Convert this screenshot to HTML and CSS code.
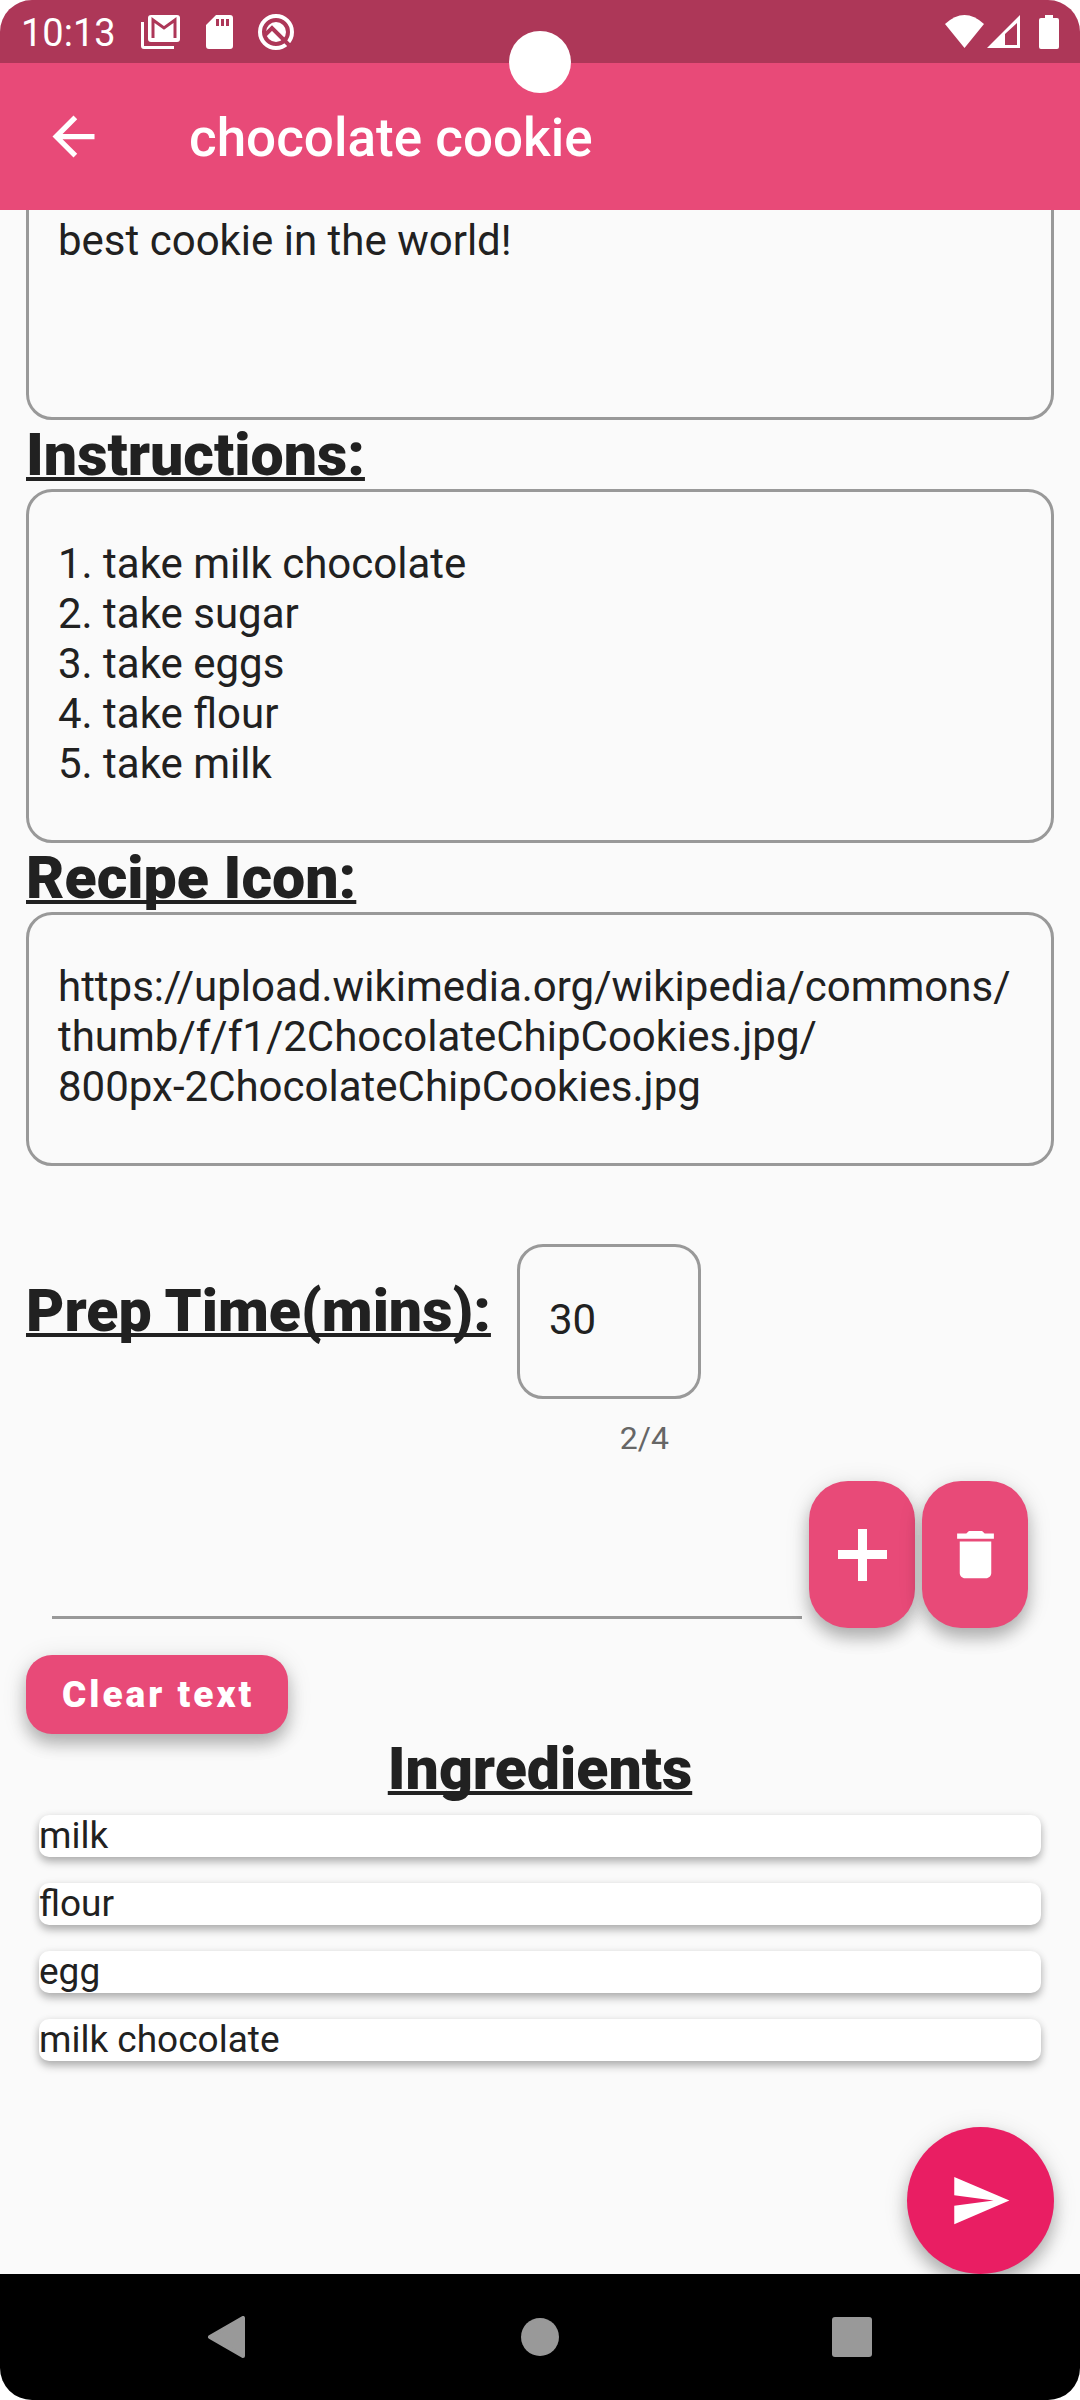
FILE: index.html
```html
<!DOCTYPE html>
<html lang="en">
<head>
<meta charset="utf-8">
<meta name="viewport" content="width=device-width, initial-scale=1">
<title>chocolate cookie</title>
<link rel="stylesheet" href="styles.css">
</head>
<body>
<div class="screen">
  <div class="status-bar">
    <span class="clock">10:13</span>
    <div class="status-group notifications">
      <svg class="ico-mail" viewBox="0 0 40 34" aria-hidden="true">
        <path fill="#fff" d="M0 7h3v24h30v3H3a3 3 0 0 1-3-3z"/>
        <rect x="7" y="0" width="32" height="27" rx="3" fill="#fff"/>
        <path d="M12 23V5l11 8 11-8v18" fill="none" stroke="#ad3758" stroke-width="3"/>
      </svg>
      <svg class="ico-sd" viewBox="0 0 27 34" aria-hidden="true">
        <path fill="#fff" fill-rule="evenodd" d="M10 0h14a3 3 0 0 1 3 3v28a3 3 0 0 1-3 3H3a3 3 0 0 1-3-3V10zM10 4v7h3V4zM15 4v7h3V4zM20 4v7h3V4z"/>
      </svg>
      <svg class="ico-q" viewBox="0 0 36 36" aria-hidden="true">
        <circle cx="18" cy="18" r="16" fill="none" stroke="#fff" stroke-width="4"/>
        <circle cx="18" cy="18" r="10" fill="#fff"/>
        <path d="M7 21l7-7 17 17" fill="none" stroke="#ad3758" stroke-width="4"/>
      </svg>
    </div>
    <div class="status-group system">
      <svg class="ico-wifi" viewBox="0 0 39 33" aria-hidden="true"><path fill="#fff" d="M0 9Q19.500-9 39 9L19.500 33z"/></svg>
      <svg class="ico-signal" viewBox="0 0 33 33" aria-hidden="true"><path fill="#fff" fill-rule="evenodd" d="M33 0v33H0zM18 19v11h12V8z"/></svg>
      <svg class="ico-battery" viewBox="0 0 20 34" aria-hidden="true"><path fill="#fff" d="M6 0h8v3h4a2 2 0 0 1 2 2v27a2 2 0 0 1-2 2H2a2 2 0 0 1-2-2V5a2 2 0 0 1 2-2h4z"/></svg>
    </div>
    <span class="camera"></span>
  </div>

  <header class="app-bar">
    <button class="back" type="button" aria-label="Back">
      <svg class="icon" viewBox="0 0 24 24"><path fill="#fff" d="M20 11H7.830l5.590-5.590L12 4l-8 8 8 8 1.410-1.410L7.830 13H20z"/></svg>
    </button>
    <h1 class="title">chocolate cookie</h1>
  </header>

  <main class="content">
    <form class="form">
      <textarea class="field description" rows="3" aria-label="Description" spellcheck="false">best cookie in the world!</textarea>

      <label class="heading" for="instructions">Instructions:</label>
      <textarea class="field" id="instructions" rows="5" spellcheck="false">1. take milk chocolate
2. take sugar
3. take eggs
4. take flour
5. take milk</textarea>

      <label class="heading" for="icon-url">Recipe Icon:</label>
      <textarea class="field" id="icon-url" rows="3" spellcheck="false">https://upload.wikimedia.org/wikipedia/commons/
thumb/f/f1/2ChocolateChipCookies.jpg/
800px-2ChocolateChipCookies.jpg</textarea>

      <div class="prep-row">
        <label class="heading prep-label" for="prep">Prep Time(mins):</label>
        <div class="prep-field">
          <input class="field" id="prep" type="text" inputmode="numeric" maxlength="4" value="30">
          <span class="counter">2/4</span>
        </div>
      </div>

      <div class="add-row">
        <input class="line-input" type="text" aria-label="Ingredient">
        <button class="square-btn" type="button" aria-label="Add ingredient">
          <svg class="ico-plus" viewBox="0 0 49 52"><path fill="#fff" d="M20 0h9v21h20v9H29v22h-9V30H0v-9h20z"/></svg>
        </button>
        <button class="square-btn" type="button" aria-label="Delete ingredient">
          <svg class="icon" viewBox="0 0 24 24"><path fill="#fff" d="M6 19c0 1.100.9 2 2 2h8c1.100 0 2-.9 2-2V7H6v12zM19 4h-3.500l-1-1h-5l-1 1H5v2h14V4z"/></svg>
        </button>
      </div>

      <button class="clear-btn" type="button">Clear text</button>
    </form>

    <h2 class="heading centered">Ingredients</h2>
    <ul class="ingredients">
      <li class="card">milk</li>
      <li class="card">flour</li>
      <li class="card">egg</li>
      <li class="card">milk chocolate</li>
    </ul>

    <button class="fab" type="button" aria-label="Send">
      <svg class="icon" viewBox="0 0 24 24"><path fill="#fff" d="M2.010 21L23 12 2.010 3 2 10l15 2-15 2z"/></svg>
    </button>
  </main>

  <nav class="nav-bar">
    <button class="nav-btn" type="button" aria-label="Back">
      <svg class="nav-icon" viewBox="0 0 42 42"><path fill="#999" stroke="#999" stroke-width="4" stroke-linejoin="round" d="M4 21L37 2v38z"/></svg>
    </button>
    <button class="nav-btn" type="button" aria-label="Home">
      <svg class="nav-icon" viewBox="0 0 42 42"><circle cx="21" cy="21" r="19" fill="#999"/></svg>
    </button>
    <button class="nav-btn" type="button" aria-label="Overview">
      <svg class="nav-icon" viewBox="0 0 42 42"><rect x="0" y="1" width="40" height="40" rx="3" fill="#999"/></svg>
    </button>
  </nav>
</div>
</body>
</html>
```
FILE: styles.css
```css
:root {
  --pink: #e84a78;
  --pink-dark: #ad3758;
  --accent: #e91e63;
  --ink: #212121;
  --line: #999;
  --raised: 0 10px 16px rgba(0, 0, 0, .24), 0 4px 26px rgba(0, 0, 0, .12);
}

* {
  box-sizing: border-box;
}

body {
  margin: 0;
  background: #fff;
  color: var(--ink);
  font-family: Roboto, "Liberation Sans", sans-serif;
  font-size: 42px;
  line-height: 50px;
}

button,
input,
textarea {
  font: inherit;
  color: inherit;
  border: 0;
  margin: 0;
  outline: 0;
}

button {
  display: flex;
  align-items: center;
  justify-content: center;
  padding: 0;
}

svg {
  display: block;
}

.screen {
  display: flex;
  flex-direction: column;
  min-height: 100vh;
  border-radius: 32px;
  overflow: hidden;
  background: #fafafa;
}

.status-bar {
  position: relative;
  z-index: 2;
  display: flex;
  align-items: center;
  height: 63px;
  padding: 0 21px;
  background: var(--pink-dark);
  color: #fff;
}

.clock {
  padding-top: 2px;
  font-size: 38px;
}

.status-group {
  display: flex;
  align-items: center;
}

.notifications {
  gap: 25px;
  margin-left: 25px;
}

.system {
  margin-left: auto;
}

.ico-mail { width: 40px; height: 34px; }
.ico-sd { width: 27px; height: 34px; }
.ico-q { width: 36px; height: 36px; }
.ico-wifi { width: 39px; height: 33px; }
.ico-signal { width: 33px; height: 33px; margin-left: 3px; }
.ico-battery { width: 20px; height: 34px; margin-left: 19px; }

.camera {
  position: absolute;
  top: 31px;
  left: 50%;
  width: 62px;
  height: 62px;
  margin-left: -31px;
  border-radius: 50%;
  background: #fff;
}

.app-bar {
  position: relative;
  z-index: 1;
  display: flex;
  align-items: center;
  gap: 84px;
  height: 147px;
  padding: 0 42px;
  background: var(--pink);
  color: #fff;
}

.back {
  background: none;
}

.icon {
  width: 63px;
  height: 63px;
}

.title {
  margin: 0;
  padding-top: 2px;
  font-size: 53px;
  font-weight: 500;
  line-height: 62px;
}

.content {
  position: relative;
  flex: 1;
  padding: 0 26px 211px;
}

.form {
  display: flex;
  flex-direction: column;
}

.field {
  display: block;
  width: 100%;
  padding: 47px 29px 51px;
  border: 3px solid var(--line);
  border-radius: 26px;
  background: none;
  resize: none;
  overflow: hidden;
}

/* The form is scrolled: the top of this field lies under the app bar. */
.description {
  margin-top: -44px;
}

.heading {
  margin: 0;
  font-size: 59px;
  font-weight: 900;
  line-height: 69px;
  text-decoration: underline;
  text-decoration-thickness: 4px;
  text-decoration-skip-ink: none;
}

.prep-row {
  display: flex;
  align-items: flex-start;
  gap: 26px;
  margin-top: 78px;
}

.prep-label {
  padding-top: 32px;
}

.prep-field {
  display: flex;
  flex-direction: column;
  width: 184px;
}

.prep-field .field {
  height: 155px;
}

.counter {
  padding: 20px 32px 0 0;
  color: #666;
  font-size: 32px;
  line-height: 38px;
  text-align: right;
}

.add-row {
  display: flex;
  align-items: flex-end;
  gap: 7px;
  margin-top: 24px;
  padding: 0 26px;
}

.line-input {
  flex: 1;
  min-width: 0;
  height: 80px;
  margin-bottom: 9px;
  padding: 0;
  border-bottom: 3px solid var(--line);
  background: none;
}

.square-btn {
  width: 106px;
  height: 147px;
  border-radius: 39px;
  background: var(--pink);
  box-shadow: var(--raised);
}

.ico-plus {
  width: 49px;
  height: 52px;
}

.clear-btn {
  align-self: flex-start;
  margin-top: 27px;
  padding: 0 34px 0 36px;
  height: 79px;
  border-radius: 26px;
  background: var(--pink);
  box-shadow: var(--raised);
  color: #fff;
  font-size: 37px;
  font-weight: 900;
  letter-spacing: 3px;
}

.centered {
  text-align: center;
}

.ingredients {
  display: flex;
  flex-direction: column;
  gap: 26px;
  margin: 0;
  padding: 12px 13px 0;
  list-style: none;
}

.card {
  border-radius: 10px;
  background: #fff;
  box-shadow: 0 5px 8px rgba(0, 0, 0, .27), 0 1px 8px rgba(0, 0, 0, .08);
  font-size: 37px;
  line-height: 42px;
}

.fab {
  position: absolute;
  right: 26px;
  bottom: 0;
  width: 147px;
  height: 147px;
  border-radius: 50%;
  background: var(--accent);
  box-shadow: var(--raised);
}

.nav-bar {
  position: relative;
  display: grid;
  grid-template-columns: repeat(3, 1fr);
  height: 126px;
  padding: 0 70px;
  background: #000;
}

.nav-btn {
  background: none;
}

.nav-icon {
  width: 42px;
  height: 42px;
}
```
